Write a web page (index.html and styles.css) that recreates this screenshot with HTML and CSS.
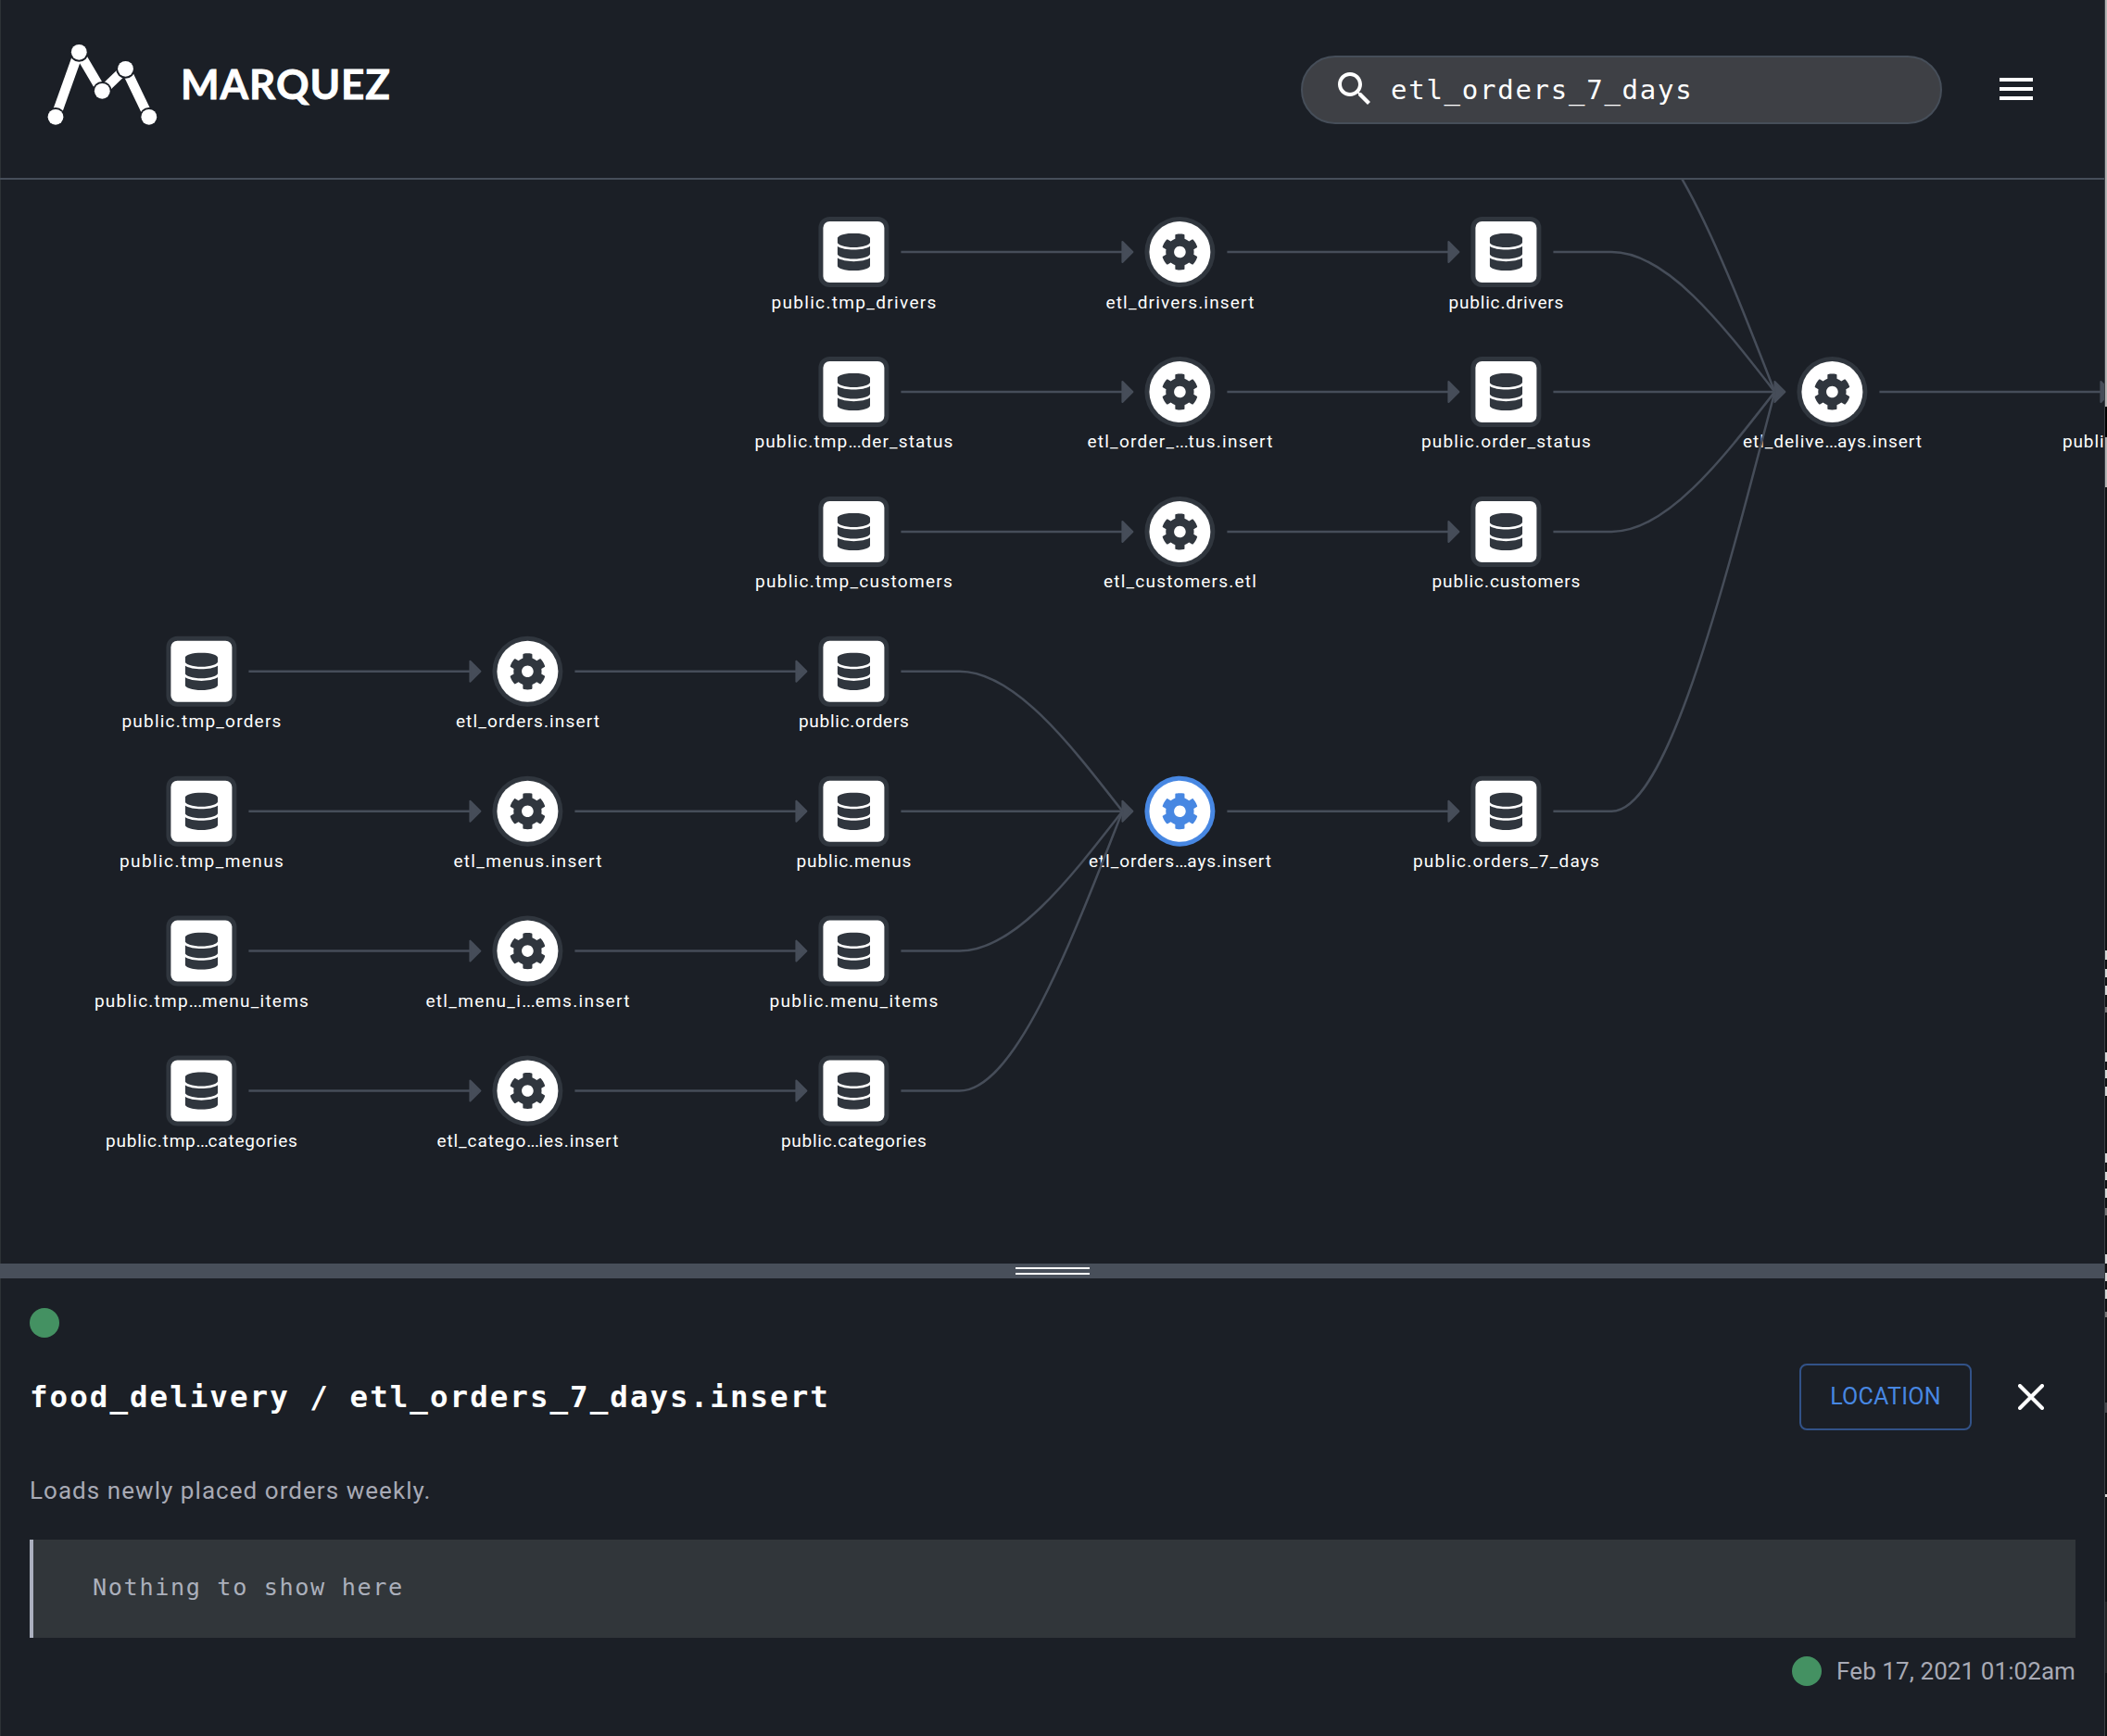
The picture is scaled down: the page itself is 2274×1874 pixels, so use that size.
FILE: index.html
```html
<!DOCTYPE html>
<html lang="en">
<head>
<meta charset="utf-8">
<title>Marquez</title>
<link rel="stylesheet" href="styles.css">
</head>
<body>
<div class="screen">
  <div class="app">
    <header class="header">
      <svg class="logo" viewBox="0 0 380 100" role="img" aria-label="Marquez">
        <g class="logo-bars">
          <path d="M10 83 35 13"/>
          <path d="M35 13 60 55.500"/>
          <path d="M60 55.500 85.500 31"/>
          <path d="M85.500 31 110.500 83"/>
        </g>
        <g class="logo-dots">
          <circle cx="10" cy="83.300" r="8.400"/>
          <circle cx="35.300" cy="13.300" r="8.400"/>
          <circle cx="60.300" cy="55.300" r="8.400"/>
          <circle cx="85.500" cy="31.300" r="8.400"/>
          <circle cx="110.800" cy="83.300" r="8.400"/>
        </g>
        <text class="logo-text" x="145" y="63.500" textLength="226">MARQUEZ</text>
      </svg>
      <div class="header-tools">
        <div class="search">
          <svg class="search-icon" viewBox="0 0 24 24"><path d="M15.500 14h-.79l-.28-.27C15.410 12.590 16 11.110 16 9.500 16 5.910 13.090 3 9.500 3S3 5.910 3 9.500 5.910 16 9.500 16c1.610 0 3.090-.59 4.230-1.570l.27.28v.79l5 4.990L20.490 19l-4.990-5zm-6 0C7.010 14 5 11.990 5 9.500S7.010 5 9.500 5 14 7.010 14 9.500 11.990 14 9.500 14z"/></svg>
          <span class="search-text">etl_orders_7_days</span>
        </div>
        <svg class="menu-icon" viewBox="0 0 24 24"><path d="M3 18h18v-2H3v2zm0-5h18v-2H3v2zm0-7v2h18V6H3z"/></svg>
      </div>
    </header>

    <main class="lineage">
      <svg class="graph" viewBox="-0.4 194 2271 1170">
        <defs>
          <g id="dataset">
            <rect class="ring" x="-38" y="-38" width="76" height="76" rx="12"/>
            <rect class="face" x="-33" y="-33" width="66" height="66" rx="7"/>
            <svg x="-17.700" y="-20.200" width="35.400" height="40.400" viewBox="0 0 448 512"><path class="glyph" d="M448 73.143v45.714C448 159.143 347.667 192 224 192S0 159.143 0 118.857V73.143C0 32.857 100.333 0 224 0s224 32.857 224 73.143zM448 176v102.857C448 319.143 347.667 352 224 352S0 319.143 0 278.857V176c48.125 33.143 136.208 48.572 224 48.572S399.874 209.143 448 176zm0 160v102.857C448 479.143 347.667 512 224 512S0 479.143 0 438.857V336c48.125 33.143 136.208 48.572 224 48.572S399.874 369.143 448 336z"/></svg>
          </g>
          <g id="job">
            <circle class="ring" r="38"/>
            <circle class="face" r="33"/>
            <svg x="-20.200" y="-20.200" width="40.400" height="40.400" viewBox="0 0 512 512"><path class="glyph" d="M487.400 315.700l-42.600-24.600c4.300-23.200 4.300-47 0-70.200l42.600-24.600c4.900-2.800 7.100-8.600 5.500-14-11.100-35.600-30-67.800-54.700-94.600-3.800-4.100-10-5.100-14.800-2.300L380.800 110c-17.900-15.400-38.500-27.300-60.800-35.100V25.800c0-5.600-3.900-10.500-9.400-11.700-36.700-8.200-74.300-7.800-109.200 0-5.500 1.200-9.400 6.100-9.400 11.700V75c-22.200 7.900-42.800 19.800-60.800 35.100L88.700 85.500c-4.900-2.800-11-1.900-14.800 2.300-24.700 26.700-43.600 58.900-54.700 94.600-1.700 5.400.6 11.200 5.500 14L67.300 221c-4.300 23.200-4.300 47 0 70.200l-42.600 24.600c-4.900 2.800-7.100 8.600-5.500 14 11.100 35.600 30 67.800 54.700 94.600 3.800 4.100 10 5.100 14.800 2.300l42.600-24.600c17.900 15.400 38.500 27.300 60.800 35.100v49.200c0 5.600 3.900 10.500 9.400 11.700 36.700 8.200 74.300 7.800 109.200 0 5.500-1.200 9.400-6.100 9.400-11.700v-49.200c22.200-7.900 42.800-19.800 60.800-35.100l42.600 24.600c4.900 2.800 11 1.900 14.800-2.300 24.700-26.700 43.600-58.900 54.700-94.600 1.500-5.500-.7-11.300-5.600-14.100zM256 336c-44.100 0-80-35.900-80-80s35.900-80 80-80 80 35.900 80 80-35.900 80-80 80z"/></svg>
          </g>
          <path id="tip" class="tip" d="M-12-11V11L-1 0z"/>
          <g id="link"><path class="edge" d="M51 0H291"/><use href="#tip" x="302"/></g>
        </defs>

        <g class="nodes">
          <g transform="translate(921 272)"><use href="#dataset"/><text y="61" textLength="178">public.tmp_drivers</text></g>
          <g transform="translate(1273 272)"><use href="#job"/><text y="61" textLength="160">etl_drivers.insert</text></g>
          <g transform="translate(1625 272)"><use href="#dataset"/><text y="61" textLength="124">public.drivers</text></g>

          <g transform="translate(921 423)"><use href="#dataset"/><text y="60" textLength="214">public.tmp<tspan class="cut">...</tspan>der_status</text></g>
          <g transform="translate(1273 423)"><use href="#job"/><text y="60" textLength="200">etl_order_<tspan class="cut">...</tspan>tus.insert</text></g>
          <g transform="translate(1625 423)"><use href="#dataset"/><text y="60" textLength="183">public.order_status</text></g>
          <g transform="translate(1977 423)"><use href="#job"/><text y="60" textLength="193">etl_delive<tspan class="cut">...</tspan>ays.insert</text></g>
          <g transform="translate(2329 423)"><use href="#dataset"/><text y="60" textLength="207">public.delivery_7_days</text></g>

          <g transform="translate(921 574)"><use href="#dataset"/><text y="60" textLength="213">public.tmp_customers</text></g>
          <g transform="translate(1273 574)"><use href="#job"/><text y="60" textLength="165">etl_customers.etl</text></g>
          <g transform="translate(1625 574)"><use href="#dataset"/><text y="60" textLength="160">public.customers</text></g>

          <g transform="translate(217 724.800)"><use href="#dataset"/><text y="60" textLength="172">public.tmp_orders</text></g>
          <g transform="translate(569 724.800)"><use href="#job"/><text y="60" textLength="155">etl_orders.insert</text></g>
          <g transform="translate(921 724.800)"><use href="#dataset"/><text y="60" textLength="119">public.orders</text></g>

          <g transform="translate(217 875.700)"><use href="#dataset"/><text y="60" textLength="177">public.tmp_menus</text></g>
          <g transform="translate(569 875.700)"><use href="#job"/><text y="60" textLength="160">etl_menus.insert</text></g>
          <g transform="translate(921 875.700)"><use href="#dataset"/><text y="60" textLength="124">public.menus</text></g>
          <g class="selected" transform="translate(1273 875.700)"><use href="#job"/><text y="60" textLength="197">etl_orders<tspan class="cut">...</tspan>ays.insert</text></g>
          <g transform="translate(1625 875.700)"><use href="#dataset"/><text y="60" textLength="201">public.orders_7_days</text></g>

          <g transform="translate(217 1026.600)"><use href="#dataset"/><text y="60" textLength="231">public.tmp<tspan class="cut">...</tspan>menu_items</text></g>
          <g transform="translate(569 1026.600)"><use href="#job"/><text y="60" textLength="220">etl_menu_i<tspan class="cut">...</tspan>ems.insert</text></g>
          <g transform="translate(921 1026.600)"><use href="#dataset"/><text y="60" textLength="182">public.menu_items</text></g>

          <g transform="translate(217 1177.500)"><use href="#dataset"/><text y="60" textLength="207">public.tmp<tspan class="cut">...</tspan>categories</text></g>
          <g transform="translate(569 1177.500)"><use href="#job"/><text y="60" textLength="196">etl_catego<tspan class="cut">...</tspan>ies.insert</text></g>
          <g transform="translate(921 1177.500)"><use href="#dataset"/><text y="60" textLength="157">public.categories</text></g>
        </g>

        <g class="edges">
          <use href="#link" x="921" y="272"/><use href="#link" x="1273" y="272"/>
          <use href="#link" x="921" y="423"/><use href="#link" x="1273" y="423"/><use href="#link" x="1625" y="423"/><use href="#link" x="1977" y="423"/>
          <use href="#link" x="921" y="574"/><use href="#link" x="1273" y="574"/>
          <use href="#link" x="217" y="724.800"/><use href="#link" x="569" y="724.800"/>
          <use href="#link" x="217" y="875.700"/><use href="#link" x="569" y="875.700"/><use href="#link" x="921" y="875.700"/><use href="#link" x="1273" y="875.700"/>
          <use href="#link" x="217" y="1026.600"/><use href="#link" x="569" y="1026.600"/>
          <use href="#link" x="217" y="1177.500"/><use href="#link" x="569" y="1177.500"/>
          <path class="edge" d="M1676 121H1739C1797.700 121 1856.300 272 1915 423"/>
          <path class="edge" d="M1676 272H1739C1797.700 272 1856.300 347.500 1915 423"/>
          <path class="edge" d="M1676 574H1739C1797.700 574 1856.300 498.500 1915 423"/>
          <path class="edge" d="M1676 875.700H1739C1797.700 875.700 1856.300 649.500 1915 423"/>
          <path class="edge" d="M972 724.800H1035C1093.700 724.800 1152.300 800.300 1211 875.700"/>
          <path class="edge" d="M972 1026.600H1035C1093.700 1026.600 1152.300 951.200 1211 875.700"/>
          <path class="edge" d="M972 1177.500H1035C1093.700 1177.500 1152.300 1026.600 1211 875.700"/>
        </g>
      </svg>
    </main>

    <div class="divider"><div class="grip"></div></div>

    <section class="details">
      <div class="status-dot"></div>
      <div class="title-row">
        <h1 class="title">food_delivery / etl_orders_7_days.insert</h1>
        <div class="actions">
          <button class="location">LOCATION</button>
          <svg class="close" viewBox="0 0 28 28"><path d="M2 2 26 26M26 2 2 26"/></svg>
        </div>
      </div>
      <p class="description">Loads newly placed orders weekly.</p>
      <div class="code">Nothing to show here</div>
      <div class="run"><span class="status-dot"></span><span class="run-time">Feb 17, 2021 01:02am</span></div>
    </section>
  </div>
  <div class="backdrop"></div>
</div>
</body>
</html>
```

FILE: styles.css
```css
* { box-sizing: border-box; }

body {
  margin: 0;
  background: #1b1f26;
  color: #fff;
  font-family: Roboto, "Liberation Sans", sans-serif;
}

.screen {
  display: flex;
  width: 2274px;
  height: 1874px;
  overflow: hidden;
}

.app {
  flex: 1;
  min-width: 0;
  display: flex;
  flex-direction: column;
  background: #1b1f26;
  box-shadow: inset 1px 0 #2d3236;
  border-right: 1px solid #3a4045;
}

.backdrop {
  width: 2px;
  background:
    linear-gradient(#d8d8d8, #d8d8d8) 0 1026px / 2px 10px no-repeat,
    linear-gradient(#d8d8d8, #d8d8d8) 0 1046px / 2px 9px no-repeat,
    linear-gradient(#d8d8d8, #d8d8d8) 0 1064px / 2px 10px no-repeat,
    linear-gradient(#777, #777) 0 1087px / 2px 6px no-repeat,
    linear-gradient(#d8d8d8, #d8d8d8) 0 1136px / 2px 10px no-repeat,
    linear-gradient(#d8d8d8, #d8d8d8) 0 1155px / 2px 9px no-repeat,
    linear-gradient(#d8d8d8, #d8d8d8) 0 1173px / 2px 10px no-repeat,
    linear-gradient(#d8d8d8, #d8d8d8) 0 1245px / 2px 10px no-repeat,
    linear-gradient(#d8d8d8, #d8d8d8) 0 1265px / 2px 9px no-repeat,
    linear-gradient(#d8d8d8, #d8d8d8) 0 1283px / 2px 10px no-repeat,
    linear-gradient(#777, #777) 0 1304px / 2px 8px no-repeat,
    linear-gradient(#d8d8d8, #d8d8d8) 0 1354px / 2px 10px no-repeat,
    linear-gradient(#d8d8d8, #d8d8d8) 0 1374px / 2px 9px no-repeat,
    linear-gradient(#d8d8d8, #d8d8d8) 0 1392px / 2px 10px no-repeat,
    linear-gradient(#777, #777) 0 1416px / 2px 6px no-repeat,
    linear-gradient(#44464a, #44464a) 0 1514px / 2px 11px no-repeat,
    linear-gradient(#d8d8d8, #d8d8d8) 0 1613px / 2px 3px no-repeat,
    linear-gradient(#b4b4b4 0 439px, #000 439px 472px, #b4b4b4 472px 526px, #101214 526px 1729px, #232425 1729px 1806px, #101214 1806px);
}

.header {
  height: 194px;
  flex: none;
  display: flex;
  justify-content: space-between;
  align-items: flex-start;
  padding: 43px 71px 0 50px;
  border-bottom: 2px solid #464e59;
}

.logo { width: 380px; height: 100px; overflow: visible; }
.logo-bars path { stroke: #fff; stroke-width: 10.5; fill: none; }
.logo-dots circle { fill: #fff; stroke: #1b1f26; stroke-width: 4; paint-order: stroke; }
.logo-text { fill: #fff; stroke: #fff; stroke-width: 0.8; font: 700 44px Lato, sans-serif; }

.header-tools {
  display: flex;
  align-items: center;
  gap: 56px;
  padding-top: 17px;
}

.search {
  display: flex;
  align-items: center;
  width: 692px;
  height: 74px;
  padding: 0 32px;
  border: 2px solid #464e59;
  border-radius: 37px;
  background: #3e4045;
}

.search-icon { width: 48px; height: 48px; fill: #fff; margin-top: -2px; }

.search-text {
  margin-left: 15px;
  font: 29px/40px "DejaVu Sans Mono", monospace;
  letter-spacing: 1.74px;
}

.menu-icon { width: 48px; height: 48px; fill: #fff; margin-top: -2px; }

.lineage { height: 1170px; flex: none; }
.graph { display: block; width: 2271px; height: 1170px; overflow: hidden; }
.ring, .glyph { fill: var(--accent, #30363e); }
.face { fill: #fff; }
.nodes text { fill: #fff; font-size: 19px; text-anchor: middle; }
.cut { letter-spacing: -1.5px; }
.edge { fill: none; stroke: #464d59; stroke-width: 2.5; }
.tip { fill: #464d59; stroke: #464d59; stroke-width: 2; stroke-linejoin: round; }
.selected { --accent: #4787e2; }

.divider {
  height: 16px;
  flex: none;
  display: flex;
  justify-content: center;
  align-items: center;
  background: #484f5a;
}

.grip {
  width: 80px;
  height: 8px;
  border: solid #fff;
  border-width: 2px 0;
}

.details {
  display: flex;
  flex-direction: column;
  padding: 32px 31px 0 32px;
}

.status-dot {
  width: 32px;
  height: 32px;
  border-radius: 50%;
  background: #449162;
}

.title-row {
  display: flex;
  justify-content: space-between;
  align-items: center;
  height: 72px;
  margin-top: 28px;
}

.title {
  margin: 0;
  font: 700 32.5px/48px "DejaVu Sans Mono", monospace;
  letter-spacing: 2.03px;
}

.actions {
  display: flex;
  align-items: center;
  gap: 50px;
  padding-right: 34px;
}

.location {
  width: 186px;
  height: 72px;
  padding: 0;
  border: 2px solid #325288;
  border-radius: 8px;
  background: none;
  color: #4787e2;
  font: 25px/32px Roboto, sans-serif;
  letter-spacing: 0.25px;
}

.close { width: 28px; height: 28px; stroke: #fff; stroke-width: 4; stroke-linecap: round; }

.description {
  margin: 48px 0 0;
  color: #a8aab5;
  font-size: 26px;
  line-height: 34px;
  letter-spacing: 1.05px;
}

.code {
  height: 106px;
  margin-top: 36px;
  padding: 32px 64px;
  border-left: 4px solid #abb0bf;
  background: #31363a;
  color: #abb0bc;
  font: 25.2px/40px "DejaVu Sans Mono", monospace;
  letter-spacing: 1.63px;
}

.run {
  display: flex;
  justify-content: flex-end;
  align-items: center;
  gap: 16px;
  margin-top: 20px;
  color: #a8aab5;
  font-size: 26px;
  line-height: 32px;
  letter-spacing: 0.08px;
}
```
